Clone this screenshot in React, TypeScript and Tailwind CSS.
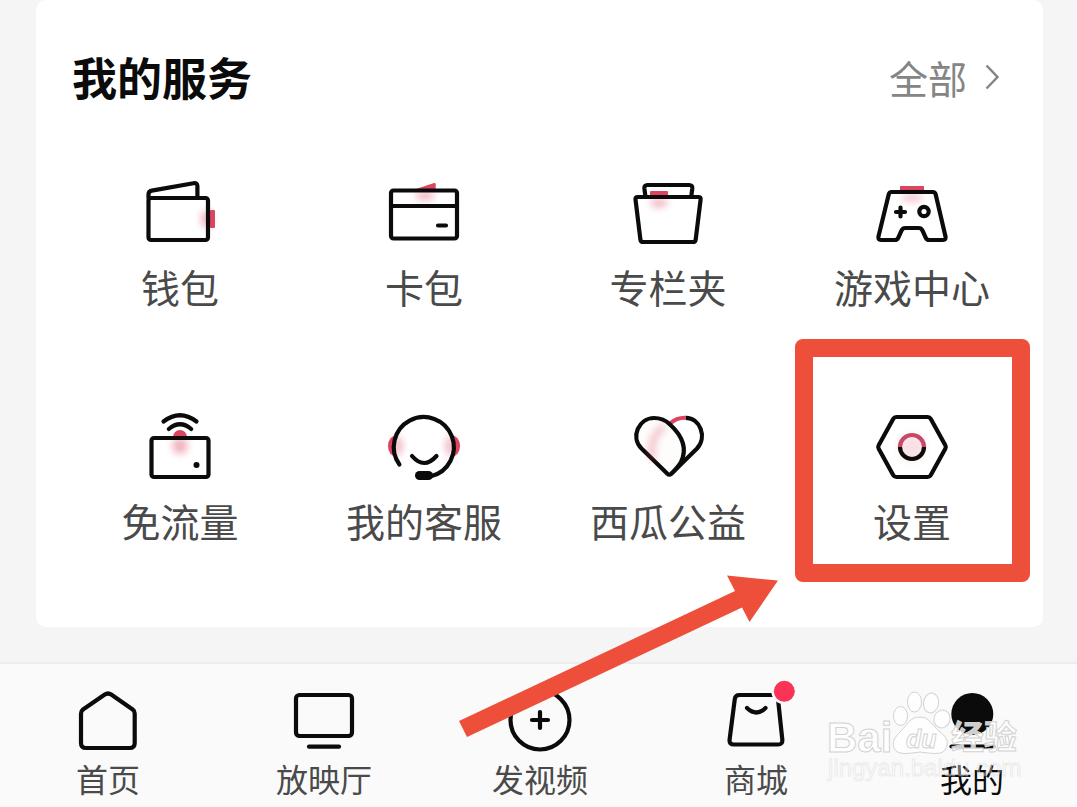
import type { ReactNode } from "react";

interface Item {
  label: string;
  icon: ReactNode;
}

const RED = "#dc4560";

const SERVICES: Item[] = [
  {
    label: "钱包",
    icon: (
      <>
        <rect x="70" y="38" width="5" height="18" rx="1" fill={RED} stroke="none" />
        <ellipse cx="66" cy="47" rx="5" ry="9" fill={RED} stroke="none" opacity=".4" filter="url(#glow)" />
        <path d="M8.5 26v-3.500q0-3.300 3.200-3.900L53.500 11.300q3.900-.7 3.900 3V25" />
        <rect x="8.500" y="26" width="59.500" height="42" rx="2.500" />
      </>
    ),
  },
  {
    label: "卡包",
    icon: (
      <>
        <path d="M29 18 50 11q1.500-.4 1.700 1.200V18z" fill={RED} stroke="none" />
        <ellipse cx="41" cy="24" rx="10" ry="4" fill={RED} stroke="none" opacity=".4" filter="url(#glow)" />
        <rect x="7" y="18.500" width="66" height="48" rx="2.500" />
        <path d="M7 34h66M54 53.500h8" />
      </>
    ),
  },
  {
    label: "专栏夹",
    icon: (
      <>
        <rect x="22" y="19" width="18" height="6" rx="1" fill={RED} stroke="none" />
        <ellipse cx="31" cy="31" rx="9" ry="5" fill={RED} stroke="none" opacity=".35" filter="url(#glow)" />
        <path d="m17.500 25-1.100-8.500q-.3-3.500 3.100-3.500h41.700q3.400 0 3.100 3.500L63.200 25" />
        <path d="M9.700 25h60.700q2.600 0 2.200 2.600l-4.900 39.800Q67.400 70 65 70H15.200q-2.500 0-2.800-2.600L7.500 27.600Q7.200 25 9.700 25z" />
      </>
    ),
  },
  {
    label: "游戏中心",
    icon: (
      <>
        <rect x="28" y="14" width="24" height="6" rx="1" fill={RED} stroke="none" />
        <ellipse cx="40" cy="26" rx="11" ry="4" fill={RED} stroke="none" opacity=".3" filter="url(#glow)" />
        <path d="M19.700 20h41q2.400 0 3 2.400l9.800 42q.8 3.600-2.500 3.600H57.200q-2.400 0-3.400-2.200l-3.500-7.600Q49.200 56 46.800 56H33.200q-2.400 0-3.500 2.200l-3.500 7.600Q25.200 68 22.800 68H9q-3.300 0-2.500-3.600l10.200-42Q17.300 20 19.700 20z" />
        <path d="M28.500 35.500v9M24 40h9" />
        <circle cx="52" cy="39.500" r="4.700" />
      </>
    ),
  },
  {
    label: "免流量",
    icon: (
      <>
        <circle cx="40" cy="31" r="7" fill={RED} stroke="none" />
        <rect x="13" y="33" width="54" height="36" fill="#fff" stroke="none" />
        <circle cx="40" cy="40" r="8" fill={RED} stroke="none" opacity=".4" filter="url(#glow)" />
        <path d="M23.500 15.500q16.500-12.500 33 0M28.800 23q11.200-9.500 22.400 0" />
        <rect x="11.500" y="32" width="57" height="39" rx="2.500" />
        <circle cx="56.500" cy="59" r="3" fill="#0b0b0b" stroke="none" />
      </>
    ),
  },
  {
    label: "我的客服",
    icon: (
      <>
        <ellipse cx="12" cy="40" rx="8" ry="10.500" fill={RED} stroke="none" />
        <ellipse cx="68" cy="40" rx="8" ry="10.500" fill={RED} stroke="none" />
        <path d="M23.900 66A30 30 0 1 1 56 66z" fill="#fff" stroke="none" />
        <ellipse cx="14" cy="40" rx="5" ry="10" fill={RED} stroke="none" opacity=".35" filter="url(#glow)" />
        <ellipse cx="66" cy="40" rx="5" ry="10" fill={RED} stroke="none" opacity=".35" filter="url(#glow)" />
        <path d="M15.400 58.500A30 30 0 1 1 47 70.200" />
        <path d="M28 50q12 14 24.500 0" />
        <rect x="31" y="65" width="18" height="9" rx="4.500" fill="#0b0b0b" stroke="none" />
      </>
    ),
  },
  {
    label: "西瓜公益",
    icon: (
      <>
        <path d="M42 17.500q7-6.200 16-5.700" stroke={RED} strokeLinecap="butt" />
        <path d="M58 11.800C72 12 79.500 31 69 42.500L43 68" strokeLinecap="butt" />
        <path
          d="M43.200 67.800q-1.900 1.900-3.800 0L13.500 42.500C2 31 11 12 26 12c7 0 12 2.500 16 6.500 12 11 18 23 11 37.500-2.500 4.500-6 8-9.800 11.800z"
          fill="#fefdfc"
        />
        <path d="M34 22q-12 10-10 28" stroke={RED} strokeWidth="8" opacity=".28" filter="url(#glow)" />
      </>
    ),
  },
  {
    label: "设置",
    icon: (
      <>
        <circle cx="40" cy="42" r="13" fill={RED} stroke="none" opacity=".16" filter="url(#glow)" />
        <path d="M24.300 11h31.400q2 0 3 1.700l14.600 26.600q1 1.700 0 3.400L58.700 69.300q-1 1.700-3 1.700H24.300q-2 0-3-1.700L6.700 42.700q-1-1.700 0-3.400l14.600-26.600q1-1.700 3-1.700z" />
        <path d="M28 41a12 12 0 0 0 24 0" strokeLinecap="butt" />
        <path d="M28 41a12 12 0 0 1 24 0" stroke="#c9496b" strokeLinecap="butt" />
      </>
    ),
  },
];

const TABS: Item[] = [
  {
    label: "首页",
    icon: (
      <path d="M13 32.500q0-2.500 2-4L36.800 13.600q3.200-2.200 6.400 0L64.700 28.500q2 1.500 2 4V62q0 5-5 5H18q-5 0-5-5z" />
    ),
  },
  {
    label: "放映厅",
    icon: (
      <>
        <rect x="12" y="14" width="56" height="41" rx="3.500" />
        <path d="M25 65.700h30" />
      </>
    ),
  },
  {
    label: "发视频",
    icon: (
      <>
        <circle cx="40" cy="39" r="29.500" />
        <path d="M40 31v16M32 39h16" />
      </>
    ),
  },
  {
    label: "商城",
    icon: (
      <>
        <path d="M23.500 14h33.800q4.200 0 4.700 4l4.300 40.500q.5 5-4.300 5H18q-5 0-4.400-5L18.800 18q.5-4 4.700-4z" />
        <path d="M31 27q9.500 9 18.500 0" />
        <circle cx="68.300" cy="10.300" r="13" fill="#fafafa" stroke="none" />
        <circle cx="68.300" cy="10.300" r="10.500" fill="#fb3356" stroke="none" />
      </>
    ),
  },
  {
    label: "我的",
    icon: (
      <>
        <circle cx="40.300" cy="33" r="21" fill="#0b0b0b" stroke="none" />
        <path d="M19.500 65.500h42.500" />
      </>
    ),
  },
];

function Icon({ children }: { children: ReactNode }) {
  return (
    <svg
      viewBox="0 0 80 80"
      className="size-20 overflow-visible fill-none stroke-[#0b0b0b] stroke-[4.2]"
      strokeLinecap="round"
      strokeLinejoin="round"
      aria-hidden
    >
      {children}
    </svg>
  );
}

/** Red frame around the settings entry, plus the arrow that points at it. */
function Callout() {
  return (
    <>
      <span
        className="pointer-events-none absolute -top-[67px] -bottom-[38px] left-[5px] right-1 rounded-lg border-18 border-[#ed4f3b]"
        aria-hidden
      />
      <svg
        viewBox="0 0 320 163"
        className="pointer-events-none absolute top-[169px] -left-[331px] z-10 h-[163px] w-80 fill-[#ed4f3b]"
        aria-hidden
      >
        <path d="M319 5.500 268 .5l8 15.500L0 146l8 16L283 32.500l7.500 14.500z" />
      </svg>
    </>
  );
}

function Watermark() {
  return (
    <svg
      viewBox="0 0 210 110"
      className="pointer-events-none absolute top-1 -left-11 h-[110px] w-[210px] fill-white/80 stroke-[#d2d2d2] font-['Liberation_Sans','Noto_Sans_CJK_SC',sans-serif]"
      aria-hidden
    >
      <ellipse cx="80.500" cy="31" rx="7" ry="9.500" />
      <ellipse cx="94.500" cy="17" rx="7" ry="10" />
      <ellipse cx="111" cy="18" rx="7.500" ry="10" transform="rotate(10 111 18)" />
      <ellipse cx="122" cy="34" rx="8" ry="9" transform="rotate(20 122 34)" />
      <path d="M100 32c9 0 12 8 19 14 8 6 10 11 7 17-3 7-10 6-26 4-14 2-23 3-26-4-2-6 0-10 7-17 6-6 9-14 19-14z" />
      <text x="7" y="67" className="text-[42px] font-bold">Bai</text>
      <text x="86" y="63" className="text-[25px] font-bold italic">du</text>
      <text x="131" y="64" className="text-[33px] font-bold">经验</text>
      <text x="8" y="91" className="fill-white/30 stroke-[#d2d2d2]/40 text-[24px]">jingyan.baidu.com</text>
    </svg>
  );
}

export default function App() {
  return (
    <div className="flex min-h-screen flex-col overflow-hidden bg-[#f5f5f5] font-['Noto_Sans_CJK_SC',sans-serif]">
      <svg className="absolute size-0" aria-hidden>
        <filter id="glow" x="-60%" y="-60%" width="220%" height="220%">
          <feGaussianBlur stdDeviation="3.500" />
        </filter>
      </svg>

      <main className="flex-1 pr-[34px] pb-[35px] pl-9">
        <section className="rounded-[10px] bg-white pt-[49px] pb-[83px]">
          <div className="flex items-center justify-between pr-11 pl-9">
            <h1 className="text-[45px] leading-[56px] font-bold text-[#0b0b0b]">我的服务</h1>
            <a href="#all" className="flex items-center gap-[18px] text-[39px] leading-[56px] text-[#858585]">
              全部
              <svg viewBox="0 0 14 26" className="h-[26px] w-3.5 fill-none stroke-[#858585] stroke-[2.5]" aria-hidden>
                <path d="m1.500 1.500 11 11.500-11 11.500" />
              </svg>
            </a>
          </div>

          <div className="mt-[67px] grid grid-cols-4 gap-y-24 pr-[9px] pl-[22px]">
            {SERVICES.map((s) => (
              <button key={s.label} type="button" className="relative flex flex-col items-center gap-2.5">
                <Icon>{s.icon}</Icon>
                <span className="text-[39px] leading-[48px] text-[#4a4a4a]">{s.label}</span>
                {s.label === "设置" && <Callout />}
              </button>
            ))}
          </div>
        </section>
      </main>

      <nav className="-mr-[3px] grid grid-cols-5 border-t-2 border-[#ececec] bg-[#fafafa] pt-[17px] pb-3">
        {TABS.map((t) => (
          <a key={t.label} href={`#${t.label}`} className="relative flex flex-col items-center">
            <Icon>{t.icon}</Icon>
            <span
              className={`text-[32px] leading-[34px] ${t.label === "我的" ? "text-[#0b0b0b]" : "text-[#4a4a4a]"}`}
            >
              {t.label}
            </span>
            {t.label === "我的" && <Watermark />}
          </a>
        ))}
      </nav>
    </div>
  );
}
